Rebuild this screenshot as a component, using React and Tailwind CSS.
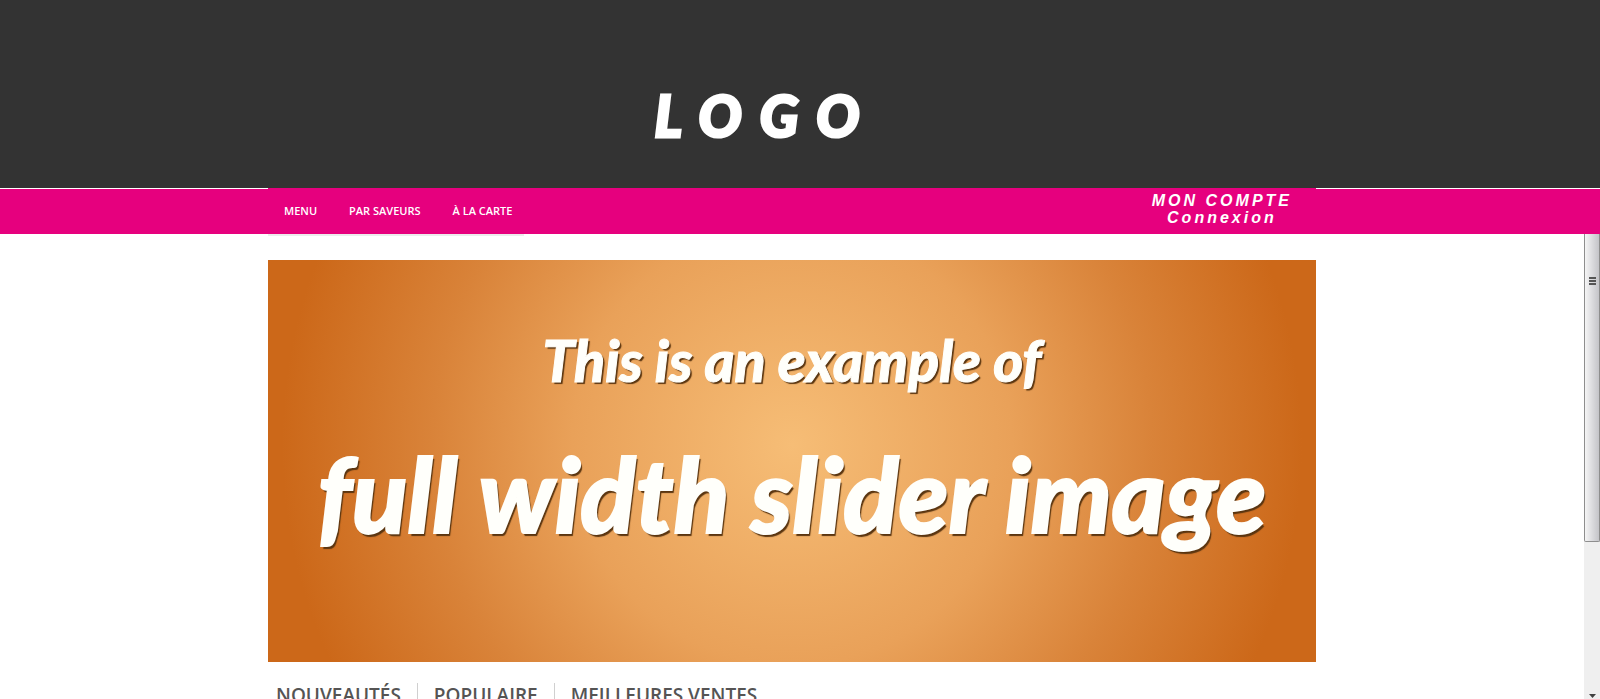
import React from "react";

const menuLinks = ["MENU", "PAR SAVEURS", "À LA CARTE"];
const tabs = ["NOUVEAUTÉS", "POPULAIRE", "MEILLEURES VENTES"];

const Header = () => (
  <header className="bg-[#333333] flex shrink-0 justify-center items-end h-47 pr-4 pb-8 text-white">
    <a href="#" className="mr-13 font-['Lato',sans-serif] font-black italic text-[57px] leading-[82px] tracking-[18px] [-webkit-text-stroke:3px_white]">
      LOGO
    </a>
  </header>
);

const Navbar = () => (
  <nav className="shrink-0 pr-4 bg-[linear-gradient(#ffffff_1px,#e6007e_1px)]">
    <div className="flex justify-between items-center w-full max-w-[1048px] h-[46px] mx-auto bg-[#e6007e] text-white">
      <ul className="flex font-['Open_Sans',sans-serif] font-semibold text-[11px] leading-4">
        {menuLinks.map((link) => (
          <li key={link}>
            <a href="#" className="px-4">{link}</a>
          </li>
        ))}
      </ul>
      <a href="#" className="mr-6 pb-1 font-['Liberation_Sans',sans-serif] font-bold italic text-base leading-[17px] tracking-[3px] text-center">
        MON COMPTE
        <br />
        Connexion
      </a>
    </div>
  </nav>
);

const Slider = () => (
  <section className="flex flex-col items-center h-[402px] mt-6 overflow-hidden whitespace-nowrap text-[#fffffb] font-['Lato',sans-serif] font-black italic bg-[radial-gradient(circle_at_50%_46%,#f6bd76_0px,#e9a159_220px,#d98339_360px,#cc6819_510px)]">
    <p className="mt-[64px] text-[57px] leading-[72px] [-webkit-text-stroke:1px_#fffffb] [text-shadow:2px_2px_1px_#5a3510]">This is an example of</p>
    <p className="mt-[38px] text-[102px] leading-[120px] [-webkit-text-stroke:2px_#fffffb] [text-shadow:2px_3px_1px_#5a3510]">full width slider image</p>
  </section>
);

const Tabs = () => (
  <div className="flex mt-[21px] font-['Open_Sans',sans-serif] font-semibold text-[19px] leading-6 text-[#555454] divide-x divide-[#d0d0d0]">
    {tabs.map((tab) => (
      <button key={tab} className="px-4 first:pl-2">{tab}</button>
    ))}
  </div>
);

const Scrollbar = () => (
  <div className="flex flex-col justify-between items-center w-4 shrink-0 bg-[#efefef]">
    <div className="flex flex-col items-center gap-px w-full h-77 pt-[43px] border border-t-0 border-[#8e8e8e] rounded-b-xs bg-linear-to-r from-[#f5f5f5] via-[#dcdcdf] to-[#c4c4c8]">
      <div className="w-[7px] h-0.5 bg-[#555555]" />
      <div className="w-[7px] h-0.5 bg-[#555555]" />
      <div className="w-[7px] h-0.5 bg-[#555555]" />
    </div>
    <svg viewBox="0 0 7 4" className="w-[7px] h-1 mb-px">
      <path d="M0 0h7L3.5 4z" fill="#404040" />
    </svg>
  </div>
);

const App = () => (
  <div className="flex flex-col h-screen overflow-hidden bg-white">
    <Header />
    <Navbar />
    <div className="flex flex-1 min-h-0">
      <main className="flex-1 min-w-0 overflow-hidden">
        <div className="w-full max-w-[1048px] mx-auto">
          <div className="w-64 h-0.5 bg-[#ececec]" />
          <Slider />
          <Tabs />
        </div>
      </main>
      <Scrollbar />
    </div>
  </div>
);

export default App;
